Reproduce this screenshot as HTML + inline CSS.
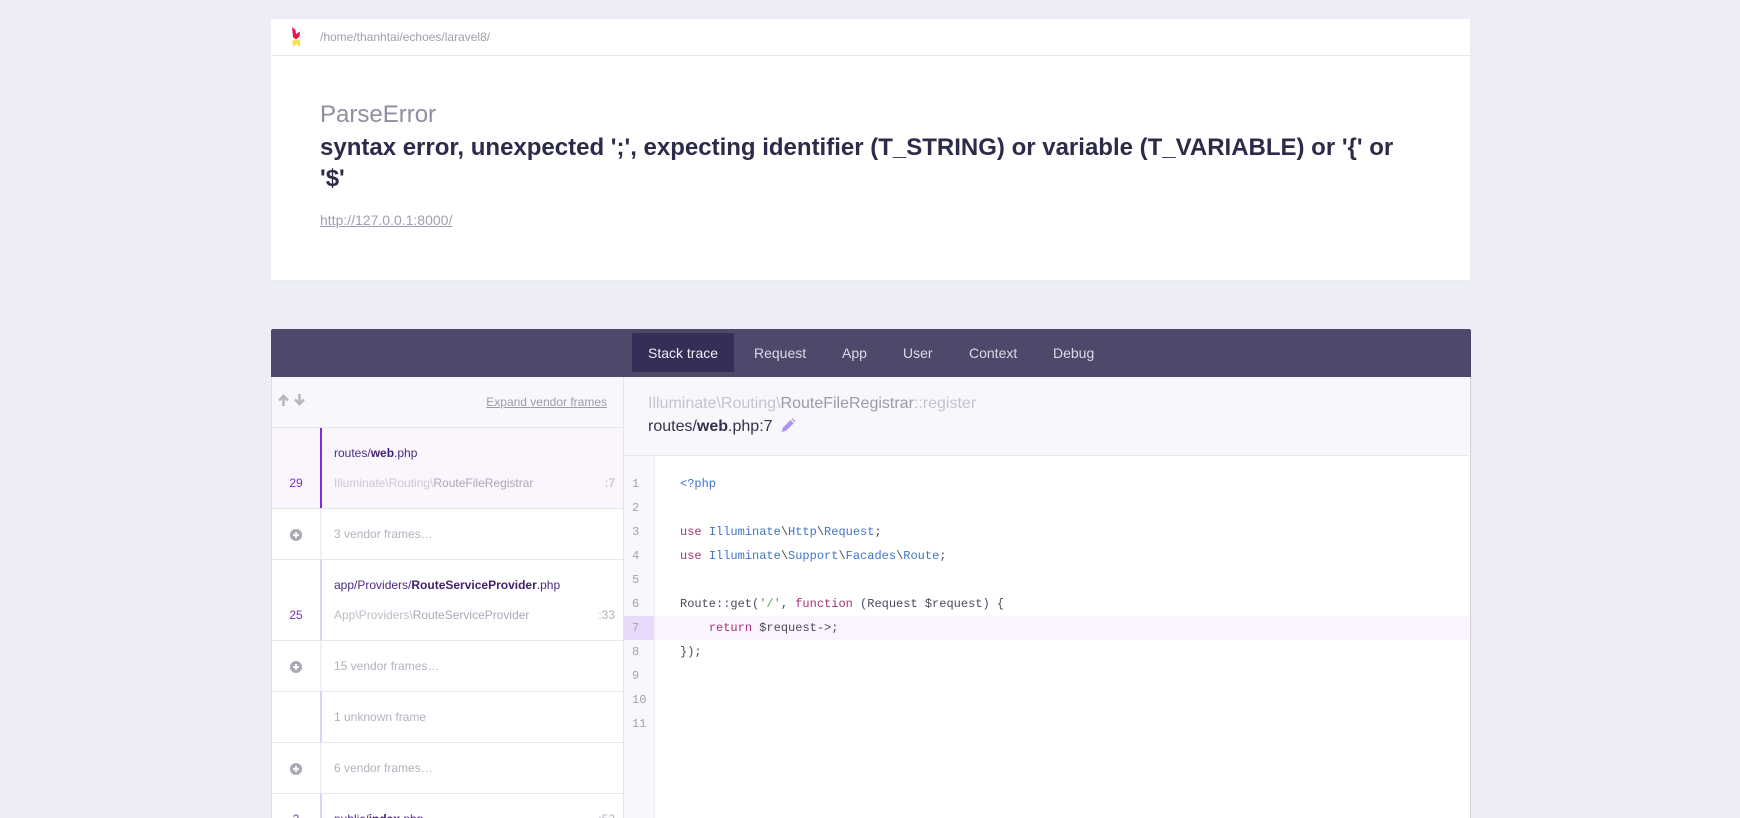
<!DOCTYPE html>
<html><head><meta charset="utf-8"><style>
html,body{margin:0;padding:0;width:1740px;height:818px;overflow:hidden;background:#edeef5;font-family:"Liberation Sans",sans-serif}
#w{position:relative;width:1740px;height:818px;overflow:hidden}
.a{position:absolute}
.t{position:absolute;white-space:nowrap;line-height:20px;height:20px}
.f{font-size:12px;color:#b3b2bf}
.fn{font-size:12px;color:#4a2a85}
.fn b{color:#43206f}
.c1{color:#c9c8d3}.c2{color:#a9a8b6}
.n{font-size:12px;color:#7a2fd0;width:50px;text-align:center;left:271px}
.tab{font-size:14px;color:#dcdbe6;top:343px}
.hr{position:absolute;left:272px;width:351px;height:1px;background:#e6e6ee}
.bar{position:absolute;left:320px;width:2px}
.m{font-family:"Liberation Mono",monospace;font-size:12px;line-height:24px;height:24px;position:absolute;white-space:pre;color:#4b4a5c}
.ln{color:#a3a2b2;left:632px}
.k{color:#a8307f}.b{color:#3f75c9}.g{color:#56a866}
</style></head><body><div id="w">
<!-- top card -->
<div class="a" style="left:271px;top:19px;width:1199px;height:261px;background:#fff;box-shadow:0 1px 2px rgba(120,120,150,.06)"></div>
<div class="a" style="left:271px;top:55px;width:1199px;height:1px;background:#e8e9f0"></div>
<svg class="a" style="left:288px;top:24px" width="16" height="24" viewBox="0 0 16 24"><path d="M4 3 L7.500 6 L8 10 L12 7.500 L11.500 12.500 L8 15.500 L5 13 Z" fill="#e6174f"/><path d="M4.500 16 L12 16 L12 23 L8.500 20 L5 23 Z" fill="#fde047"/></svg>
<div class="t" style="left:320px;top:27px;font-size:12px;color:#a09fae">/home/thanhtai/echoes/laravel8/</div>
<div class="t" style="left:320px;top:100px;font-size:24px;line-height:30px;height:30px;color:#8f8e9f">ParseError</div>
<div class="a" style="left:320px;top:132px;width:1130px;font-size:24px;line-height:31px;font-weight:bold;color:#2d2b4a">syntax error, unexpected ';', expecting identifier (T_STRING) or variable (T_VARIABLE) or '{' or<br>'$'</div>
<div class="t" style="left:320px;top:210px;font-size:14px;color:#a09fae;text-decoration:underline">http://127.0.0.1:8000/</div>

<!-- tab bar -->
<div class="a" style="left:271px;top:329px;width:1200px;height:48px;background:#4d496b;border-radius:2px 2px 0 0"></div>
<div class="a" style="left:632px;top:333px;width:102px;height:39px;background:#332f56;border-radius:2px"></div>
<div class="t tab" style="left:648px;color:#eeeef4">Stack trace</div>
<div class="t tab" style="left:754px">Request</div>
<div class="t tab" style="left:842px">App</div>
<div class="t tab" style="left:903px">User</div>
<div class="t tab" style="left:969px">Context</div>
<div class="t tab" style="left:1053px">Debug</div>

<!-- panel -->
<div class="a" style="left:271px;top:377px;height:441px;background:#fff;border-left:1px solid #dcdce4;border-right:1px solid #d0d0d8;box-sizing:border-box;width:1200px"></div>
<!-- left header -->
<div class="a" style="left:272px;top:377px;width:351px;height:50px;background:#f7f7fc"></div>
<div class="hr" style="top:427px"></div>
<svg class="a" style="left:277px;top:393px" width="13" height="14" viewBox="0 0 13 14"><path d="M6.500 13V3M2 7.500l4.500-4.500 4.500 4.500" fill="none" stroke="#b5b5c0" stroke-width="2.400"/></svg>
<svg class="a" style="left:293px;top:393px" width="13" height="14" viewBox="0 0 13 14"><path d="M6.500 1v10M2 6.500l4.500 4.500 4.500-4.500" fill="none" stroke="#b5b5c0" stroke-width="2.400"/></svg>
<div class="t" style="right:1133px;top:392px;font-size:12px;color:#9c9bab;text-decoration:underline">Expand vendor frames</div>

<!-- selected frame -->
<div class="a" style="left:272px;top:428px;width:351px;height:80px;background:#fbf5fe"></div>
<div class="bar" style="top:428px;height:80px;background:#7b2fd6"></div>
<div class="hr" style="top:508px;background:#e3e3ec"></div>
<div class="t fn" style="left:334px;top:443px">routes/<b>web</b>.php</div>
<div class="t n" style="top:473px">29</div>
<div class="t f" style="left:334px;top:473px"><span class="c1">Illuminate\Routing\</span><span class="c2">RouteFileRegistrar</span></div>
<div class="t f" style="right:1125px;top:473px;color:#b3b2bf">:7</div>

<!-- vendor 3 -->
<div class="bar" style="top:509px;height:50px;background:#f0f0f5"></div>
<svg class="a" style="left:290px;top:529px" width="12" height="12" viewBox="0 0 12 12"><circle cx="6" cy="6" r="6" fill="#a9a9b5"/><path d="M6 3v6M3 6h6" stroke="#fff" stroke-width="1.800"/></svg>
<div class="t f" style="left:334px;top:524px">3 vendor frames…</div>
<div class="hr" style="top:559px"></div>

<!-- frame 25 -->
<div class="bar" style="top:560px;height:80px;background:#d8d0f7"></div>
<div class="t fn" style="left:334px;top:575px">app/Providers/<b>RouteServiceProvider</b>.php</div>
<div class="t n" style="top:605px">25</div>
<div class="t f" style="left:334px;top:605px"><span class="c1" style="color:#bdbcc8">App\Providers\</span><span class="c2">RouteServiceProvider</span></div>
<div class="t f" style="right:1125px;top:605px">:33</div>
<div class="hr" style="top:640px"></div>

<!-- vendor 15 -->
<div class="bar" style="top:641px;height:50px;background:#f0f0f5"></div>
<svg class="a" style="left:290px;top:661px" width="12" height="12" viewBox="0 0 12 12"><circle cx="6" cy="6" r="6" fill="#a9a9b5"/><path d="M6 3v6M3 6h6" stroke="#fff" stroke-width="1.800"/></svg>
<div class="t f" style="left:334px;top:656px">15 vendor frames…</div>
<div class="hr" style="top:691px"></div>

<!-- unknown -->
<div class="bar" style="top:692px;height:50px;background:#d8d0f7"></div>
<div class="t f" style="left:334px;top:707px">1 unknown frame</div>
<div class="hr" style="top:742px"></div>

<!-- vendor 6 -->
<div class="bar" style="top:743px;height:50px;background:#f0f0f5"></div>
<svg class="a" style="left:290px;top:763px" width="12" height="12" viewBox="0 0 12 12"><circle cx="6" cy="6" r="6" fill="#a9a9b5"/><path d="M6 3v6M3 6h6" stroke="#fff" stroke-width="1.800"/></svg>
<div class="t f" style="left:334px;top:758px">6 vendor frames…</div>
<div class="hr" style="top:793px"></div>

<!-- frame 2 -->
<div class="bar" style="top:794px;height:24px;background:#d8d0f7"></div>
<div class="t n" style="top:809px">2</div>
<div class="t fn" style="left:334px;top:809px">public/<b>index</b>.php</div>
<div class="t f" style="right:1125px;top:809px">:52</div>

<!-- right header -->
<div class="a" style="left:623px;top:377px;width:1px;height:441px;background:#e3e3ec"></div>
<div class="a" style="left:624px;top:377px;width:845px;height:79px;background:#f7f7fc;border-bottom:1px solid #e6e6ee;box-sizing:border-box"></div>
<div class="t" style="left:648px;top:394px;font-size:16px"><span style="color:#c4c3cf">Illuminate\Routing\</span><span style="color:#9b9aaa">RouteFileRegistrar</span><span style="color:#c4c3cf">::register</span></div>
<div class="t" style="left:648px;top:417px;font-size:16px;color:#33324a">routes/<b>web</b>.php:7</div>
<svg class="a" style="left:780px;top:417px" width="16" height="16" viewBox="0 0 16 16"><path d="M1.500 15 L3 10.500 L10.500 3 L13.800 6.200 L6 13.800 Z" fill="#b195ea"/><path d="M11.500 2 L12.500 1.200 L15.500 4 L14.800 5.200 Z" fill="#b195ea"/></svg>

<!-- gutter -->
<div class="a" style="left:624px;top:456px;width:31px;height:362px;background:#f7f7fc;border-right:1px solid #eeeef5;box-sizing:border-box"></div>
<div class="a" style="left:624px;top:616px;width:30px;height:24px;background:#e9d9fa"></div>
<div class="a" style="left:655px;top:616px;width:814px;height:24px;background:#faf4fe"></div>
<div class="m ln" style="top:472px">1</div>
<div class="m ln" style="top:496px">2</div>
<div class="m ln" style="top:520px">3</div>
<div class="m ln" style="top:544px">4</div>
<div class="m ln" style="top:568px">5</div>
<div class="m ln" style="top:592px">6</div>
<div class="m ln" style="top:616px">7</div>
<div class="m ln" style="top:640px">8</div>
<div class="m ln" style="top:664px">9</div>
<div class="m ln" style="top:688px">10</div>
<div class="m ln" style="top:712px">11</div>

<div class="m" style="left:680px;top:472px"><span class="b">&lt;?php</span></div>
<div class="m" style="left:680px;top:520px"><span class="k">use</span> <span class="b">Illuminate</span>\<span class="b">Http</span>\<span class="b">Request</span>;</div>
<div class="m" style="left:680px;top:544px"><span class="k">use</span> <span class="b">Illuminate</span>\<span class="b">Support</span>\<span class="b">Facades</span>\<span class="b">Route</span>;</div>
<div class="m" style="left:680px;top:592px">Route::get(<span class="g">'/'</span>, <span class="k">function</span> (Request $request) {</div>
<div class="m" style="left:680px;top:616px">    <span class="k">return</span> $request-&gt;;</div>
<div class="m" style="left:680px;top:640px">});</div>
</div></body></html>
